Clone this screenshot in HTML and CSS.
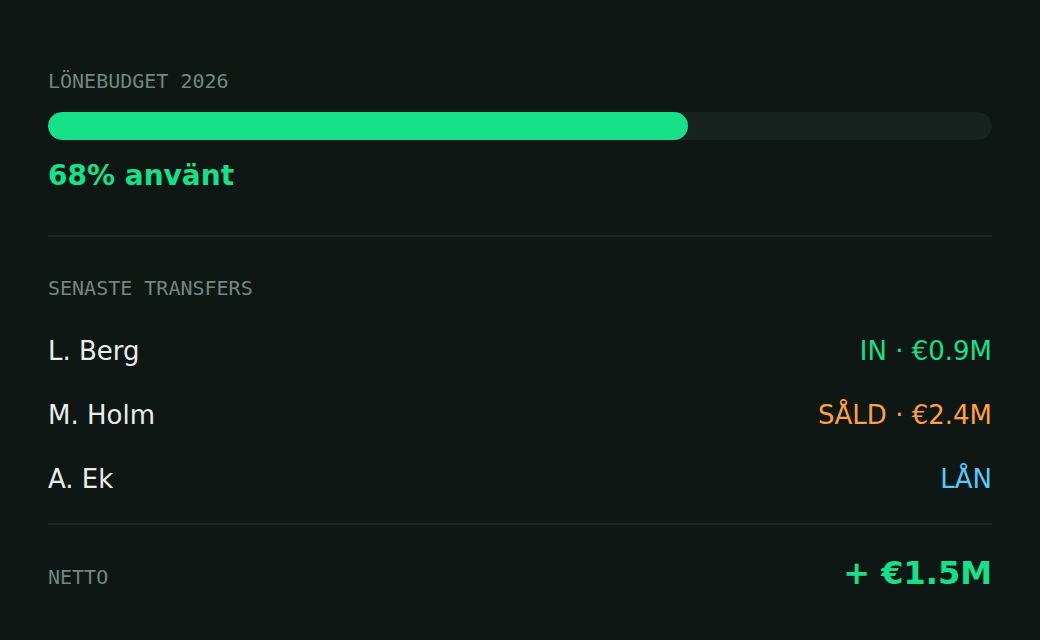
FILE: index.html
```html
<!DOCTYPE html>
<html lang="sv">
<head>
<meta charset="utf-8">
<title>Lönebudget 2026</title>
<link rel="stylesheet" href="styles.css">
</head>
<body>
<main class="panel">
  <section class="budget">
    <div class="label">LÖNEBUDGET 2026</div>
    <div class="bar"><div class="bar-fill" style="width:67.8%"></div></div>
    <div class="pct">68% använt</div>
  </section>
  <hr class="divider divider-top">
  <section class="transfers">
    <div class="label label-transfers">SENASTE TRANSFERS</div>
    <ul class="rows">
      <li class="row"><span class="name">L. Berg</span><span class="val in">IN · €0.9M</span></li>
      <li class="row"><span class="name">M. Holm</span><span class="val sold">SÅLD · €2.4M</span></li>
      <li class="row"><span class="name">A. Ek</span><span class="val loan">LÅN</span></li>
    </ul>
  </section>
  <hr class="divider divider-bottom">
  <section class="net">
    <span class="label">NETTO</span>
    <span class="net-val">+ €1.5M</span>
  </section>
</main>
</body>
</html>
```
FILE: styles.css
```css
html, body {
  margin: 0;
  padding: 0;
  background: #0f1715;
}
body {
  width: 1040px;
  height: 640px;
  overflow: hidden;
  font-family: "DejaVu Sans", "Noto Sans", sans-serif;
}
.panel {
  padding: 69px 48px 0;
}
.label {
  font-family: "DejaVu Sans Mono", "Liberation Mono", monospace;
  font-size: 20px;
  line-height: 24px;
  color: #76857f;
}
.bar {
  margin-top: 19px;
  height: 28px;
  border-radius: 14px;
  background: #18221e;
  overflow: hidden;
}
.bar-fill {
  height: 100%;
  border-radius: 14px;
  background: #16e08a;
}
.pct {
  margin-top: 19px;
  font-size: 28px;
  line-height: 34px;
  font-weight: bold;
  color: #16e08a;
}
.divider {
  border: 0;
  height: 2px;
  background: #1e2926;
  margin: 0;
}
.divider-top {
  margin-top: 42px;
}
.label-transfers {
  margin-top: 39px;
}
.rows {
  list-style: none;
  margin: 35px 0 0;
  padding: 0;
  display: flex;
  flex-direction: column;
  gap: 32px;
}
.row {
  display: flex;
  justify-content: space-between;
  align-items: baseline;
  font-size: 26px;
  line-height: 32px;
}
.name {
  color: #e8eeeb;
}
.in { color: #16e08a; }
.sold { color: #ff9f45; }
.loan { color: #5ac8fa; }
.divider-bottom {
  margin-top: 28px;
}
.net {
  margin-top: 29px;
  display: flex;
  justify-content: space-between;
  align-items: baseline;
}
.net-val {
  font-size: 32px;
  line-height: 38px;
  font-weight: bold;
  color: #16e08a;
}
```
